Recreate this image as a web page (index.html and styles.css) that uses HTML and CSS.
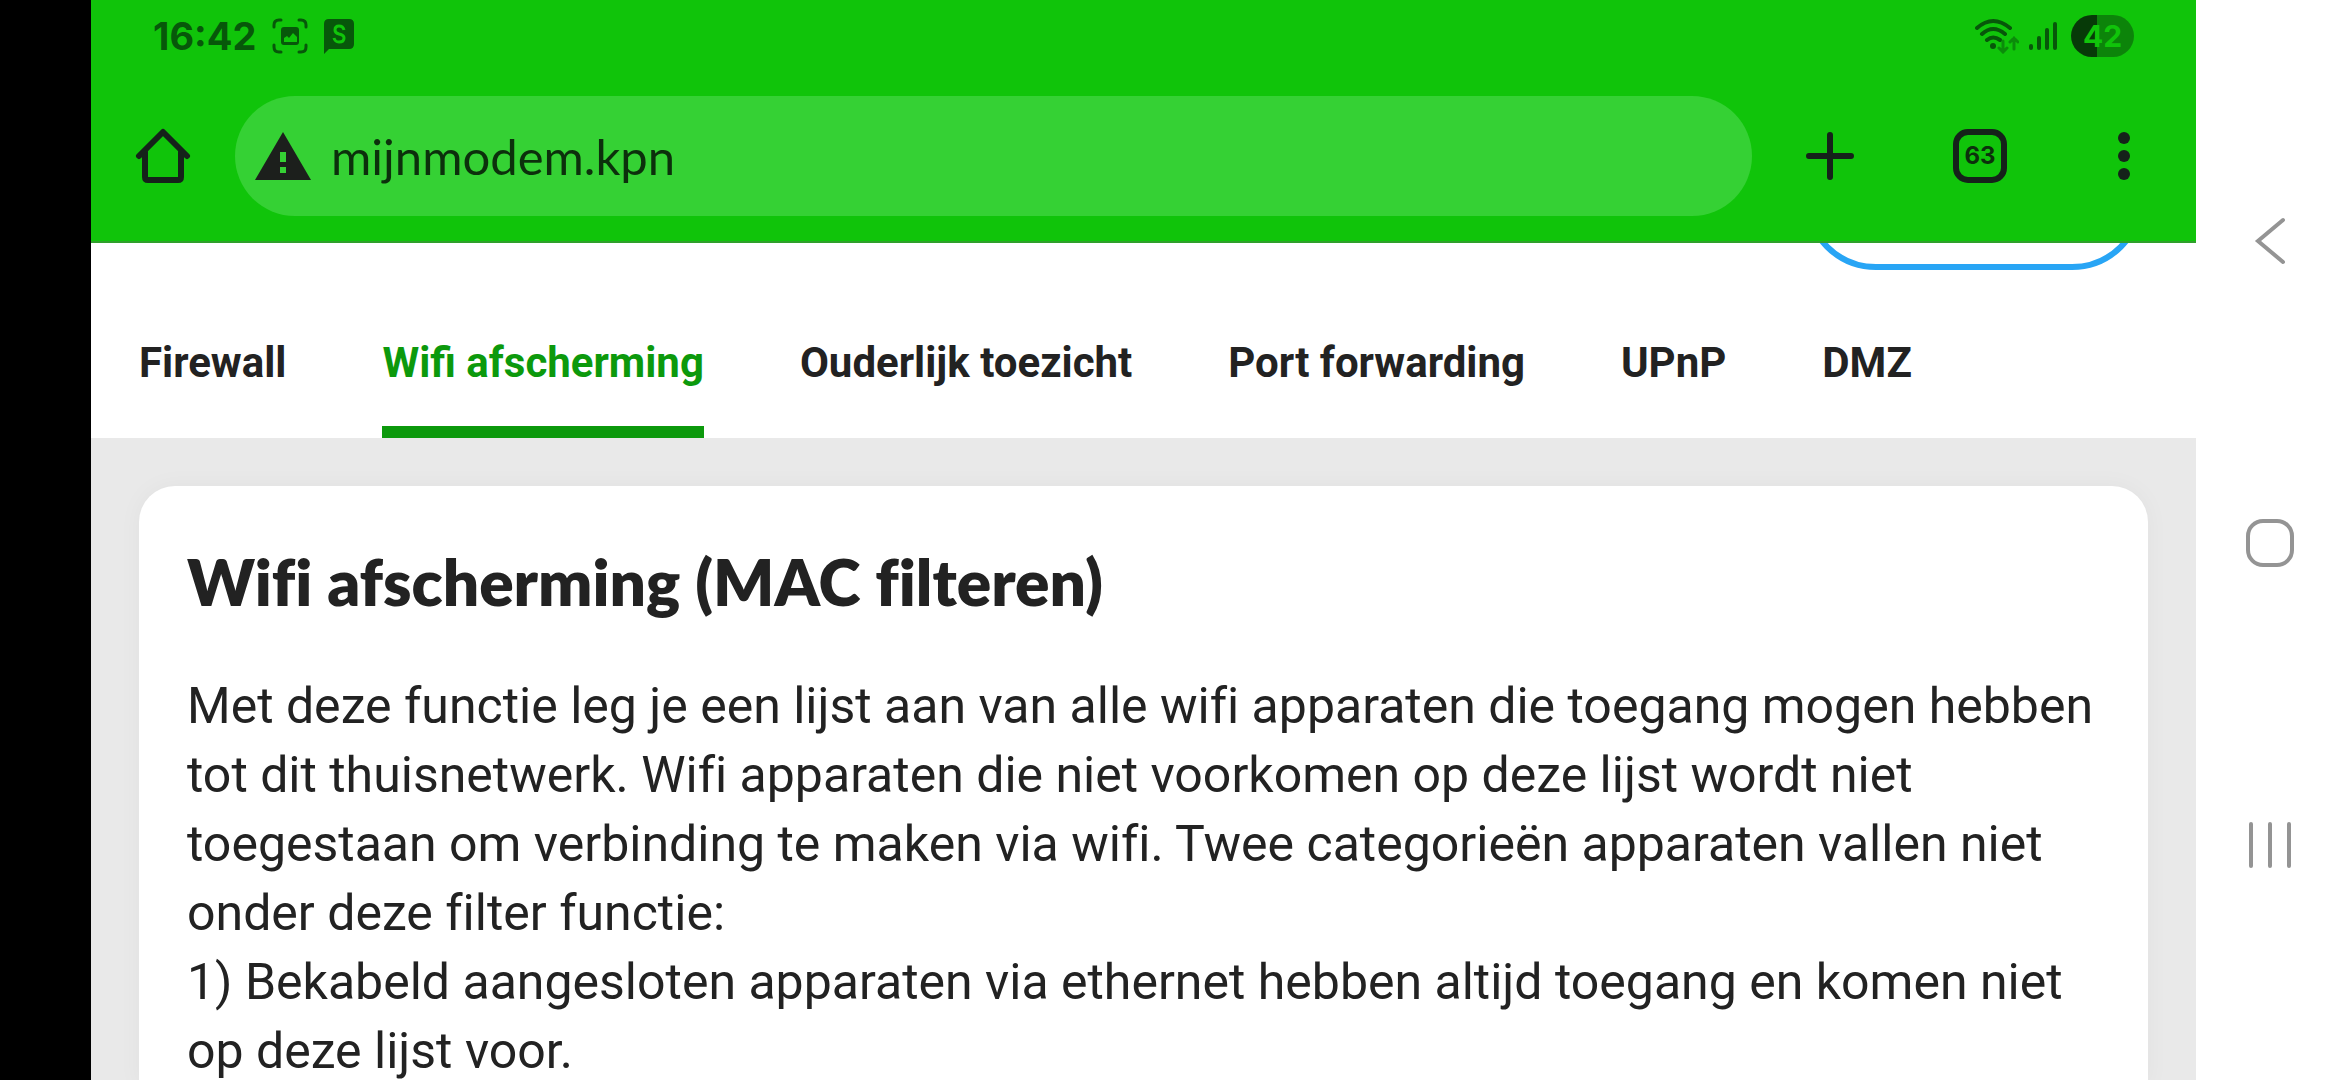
FILE: index.html
```html
<!DOCTYPE html>
<html lang="nl">
<head>
<meta charset="utf-8">
<meta name="viewport" content="width=device-width, initial-scale=1">
<title>mijnmodem.kpn</title>
<link rel="stylesheet" href="styles.css">
</head>
<body>
<div class="device">
  <div class="screen">
    <header class="browser">
      <div class="status">
        <div class="status-left">
          <time class="clock">16:42</time>
          <svg width="36" height="36" viewBox="0 0 36 36" fill="none" stroke="#07570a" stroke-width="3" stroke-linecap="round" aria-hidden="true">
            <path d="M2 9V7q0-5 5-5h2M27 2h2q5 0 5 5v2M34 27v2q0 5-5 5h-2M9 34H7q-5 0-5-5v-2"/>
            <path fill="#07570a" stroke="none" fill-rule="evenodd" d="M12 9h12q3 0 3 3v12q0 3-3 3H12q-3 0-3-3V12q0-3 3-3zM12 20v4h13v-5l-4-4-4 5-2-2z"/>
          </svg>
          <svg width="30" height="36" viewBox="0 0 30 36" aria-hidden="true">
            <path fill="#07570a" d="M5 1h20q5 0 5 5v20q0 5-5 5H5l-5 5V6q0-5 5-5z"/>
            <path fill="none" stroke="#10c40a" stroke-width="3" d="M20 12q-1-4-5-4-4 0-4 4 0 3 4 4 5 1 5 4 0 4-5 4-4 0-5-4"/>
          </svg>
        </div>
        <div class="status-right">
          <svg width="44" height="36" viewBox="0 0 44 36" fill="none" stroke="#07570a" stroke-width="4" stroke-linecap="round" aria-hidden="true">
            <path d="M2 10q16-14 33 0M7 16q11-10 23 0M12 22q6-5 13 0"/>
            <circle cx="18" cy="28" r="3" fill="#07570a" stroke="none"/>
            <path stroke="#0b8c0a" d="M28 23v11M24 30l4 4 4-4M39 31V20M35 24l4-4 4 4" stroke-width="3"/>
          </svg>
          <svg width="28" height="32" viewBox="0 0 28 32" stroke="#07570a" stroke-width="4" stroke-linecap="round" aria-hidden="true">
            <path d="M2 26v2M10 18v10M18 10v18M26 4v24"/>
          </svg>
          <span class="battery">42</span>
        </div>
      </div>
      <div class="toolbar">
        <button class="tool" type="button" aria-label="Startpagina">
          <svg width="56" height="56" viewBox="0 0 56 56" fill="none" stroke="#15221a" stroke-width="6" stroke-linecap="round" stroke-linejoin="round">
            <path d="M4 28L28 4l24 24M10 24v25q0 3 3 3h30q3 0 3-3V24"/>
          </svg>
        </button>
        <label class="omnibox">
          <svg width="56" height="48" viewBox="0 0 56 48" aria-hidden="true">
            <path fill="#1c1f1c" d="M28 0l28 48H0z"/>
            <path fill="#35d134" d="M25 20h6v10h-6zM25 35h6v6h-6z"/>
          </svg>
          <input class="address" type="text" value="mijnmodem.kpn" aria-label="Adres">
        </label>
        <div class="tools">
          <button class="tool" type="button" aria-label="Nieuw tabblad">
            <svg width="48" height="48" viewBox="0 0 48 48" stroke="#15221a" stroke-width="6" stroke-linecap="round"><path d="M24 3v42M3 24h42"/></svg>
          </button>
          <button class="tool tab-count" type="button">63</button>
          <button class="tool" type="button" aria-label="Menu">
            <svg width="12" height="48" viewBox="0 0 12 48" fill="#15221a"><circle cx="6" cy="6" r="6"/><circle cx="6" cy="24" r="6"/><circle cx="6" cy="42" r="6"/></svg>
          </button>
        </div>
      </div>
    </header>
    <div class="top-strip"><div class="pill"></div></div>
    <nav class="tabs">
      <a href="#firewall">Firewall</a>
      <a href="#wifi" class="active" aria-current="page">Wifi afscherming</a>
      <a href="#toezicht">Ouderlijk toezicht</a>
      <a href="#port">Port forwarding</a>
      <a href="#upnp">UPnP</a>
      <a href="#dmz">DMZ</a>
    </nav>
    <main class="content">
      <section class="card">
        <h1>Wifi afscherming (MAC filteren)</h1>
        <p>Met deze functie leg je een lijst aan van alle wifi apparaten die toegang mogen hebben<br>tot dit thuisnetwerk. Wifi apparaten die niet voorkomen op deze lijst wordt niet<br>toegestaan om verbinding te maken via wifi. Twee categorieën apparaten vallen niet<br>onder deze filter functie:<br>1) Bekabeld aangesloten apparaten via ethernet hebben altijd toegang en komen niet<br>op deze lijst voor.</p>
      </section>
    </main>
  </div>
  <div class="system-nav">
    <button type="button" aria-label="Terug"><svg width="48" height="48" viewBox="0 0 48 48"><path d="M37 3L12 24l25 21"/></svg></button>
    <button type="button" aria-label="Start"><svg width="48" height="48" viewBox="0 0 48 48"><rect x="2" y="2" width="44" height="44" rx="15"/></svg></button>
    <button type="button" aria-label="Recent"><svg width="48" height="48" viewBox="0 0 48 48"><path d="M5 3v42M24 3v42M43 3v42"/></svg></button>
  </div>
</div>
</body>
</html>
```

FILE: styles.css
```css
* {
  box-sizing: border-box;
}

body {
  margin: 0;
  background: #fff;
  color: #222;
  font-family: Roboto, "Liberation Sans", sans-serif;
}

button {
  display: flex;
  align-items: center;
  justify-content: center;
  padding: 0;
  border: 0;
  background: none;
  color: inherit;
}

svg {
  display: block;
  flex: none;
}

.device {
  display: flex;
  height: 100vh;
  overflow: hidden;
  border-left: 91px solid #000;
}

.screen {
  display: flex;
  flex: 1;
  flex-direction: column;
  min-width: 0;
}

.browser {
  flex: none;
  background: #10c40a;
  border-bottom: 2px solid #2fa02b;
}

.status {
  display: flex;
  justify-content: space-between;
  height: 72px;
  padding: 0 62px;
  color: #07570a;
}

.status-left,
.status-right {
  display: flex;
  align-items: center;
  height: 72px;
  gap: 16px;
}

.status-right {
  gap: 10px;
}

.clock {
  font-family: Inter, sans-serif;
  font-size: 38px;
  font-weight: 700;
}

.battery {
  width: 63px;
  height: 42px;
  margin-left: 4px;
  border-radius: 21px;
  background: linear-gradient(90deg, #073a08 26px, #0c840a 26px);
  color: #10c40a;
  font: 700 30px/42px Inter, sans-serif;
  text-align: center;
}

.toolbar {
  display: flex;
  align-items: center;
  padding: 24px 66px 25px 44px;
}

.omnibox {
  display: flex;
  flex: 1;
  align-items: center;
  gap: 20px;
  height: 120px;
  margin: 0 54px 0 44px;
  padding: 0 20px;
  border-radius: 60px;
  background: #35d134;
}

.address {
  flex: 1;
  min-width: 0;
  padding: 0;
  border: 0;
  outline: 0;
  background: none;
  color: #0c300c;
  font: 400 49px/72px Lato, sans-serif;
}

.tools {
  display: flex;
  align-items: center;
  gap: 99px;
}

.tools .tool:last-child {
  margin-left: 12px;
}

.tab-count {
  width: 54px;
  height: 54px;
  border: 6px solid #15221a;
  border-radius: 15px;
  color: #0c300c;
  font: 700 24px/26px Inter, sans-serif;
}

.top-strip {
  display: flex;
  flex: none;
  align-items: flex-end;
  justify-content: flex-end;
  height: 27px;
  padding: 0 52px;
  overflow: hidden;
}

.pill {
  flex: none;
  width: 340px;
  height: 144px;
  border: 6px solid #28a5f5;
  border-radius: 72px;
}

.tabs {
  display: flex;
  flex: none;
  gap: 96px;
  height: 168px;
  padding: 0 48px;
}

.tabs a {
  padding-top: 69px;
  border-bottom: 12px solid transparent;
  color: #222;
  font-size: 42px;
  font-weight: 700;
  line-height: 48px;
  text-decoration: none;
}

.tabs .active {
  border-color: #0c990c;
  color: #0c990c;
}

.content {
  display: flex;
  flex: 1;
  flex-direction: column;
  padding: 48px 48px 0;
  background: #e9e9e9;
}

.card {
  flex: 1;
  padding: 48px 48px 0;
  border-radius: 36px 36px 0 0;
  background: #fff;
  box-shadow: 0 0 24px rgba(0, 0, 0, 0.04);
}

h1 {
  margin: 0 0 42px;
  font: 800 64px/96px Lato, sans-serif;
  font-variant-ligatures: none;
}

p {
  margin: 0;
  font-size: 50px;
  line-height: 69px;
  font-variant-ligatures: none;
  white-space: nowrap;
}

.system-nav {
  display: flex;
  flex: none;
  flex-direction: column;
  align-items: center;
  justify-content: center;
  gap: 254px;
  width: 144px;
  padding: 6px 0 0 4px;
}

.system-nav svg {
  fill: none;
  stroke: #949494;
  stroke-width: 4;
  stroke-linecap: round;
}
```
